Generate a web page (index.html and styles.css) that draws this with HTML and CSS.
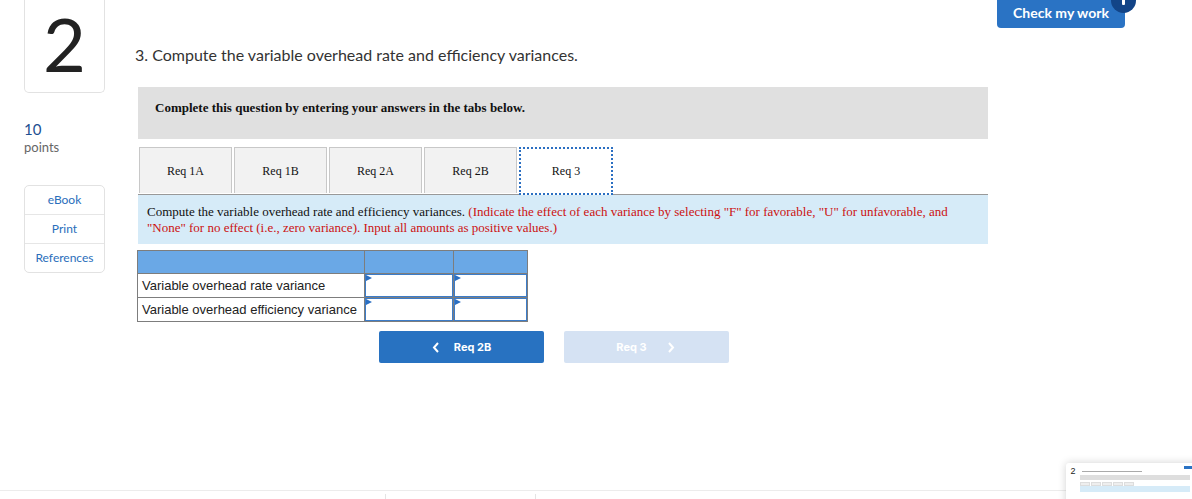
FILE: index.html
```html
<!DOCTYPE html>
<html>
<head>
<meta charset="utf-8">
<link rel="stylesheet" href="styles.css">
</head>
<body>
<div class="page">
  <aside class="side">
    <div class="qnum">2</div>
    <div class="pts"><div class="pts-val">10</div><div class="pts-lbl">points</div></div>
    <ul class="links">
      <li>eBook</li>
      <li>Print</li>
      <li>References</li>
    </ul>
  </aside>
  <main class="main">
    <h1 class="qtitle">3. Compute the variable overhead rate and efficiency variances.</h1>
    <div class="content">
      <div class="notice">Complete this question by entering your answers in the tabs below.</div>
      <div class="tabs">
        <div class="tab">Req 1A</div>
        <div class="tab">Req 1B</div>
        <div class="tab">Req 2A</div>
        <div class="tab">Req 2B</div>
        <div class="tab active">Req 3</div>
      </div>
      <div class="instr">Compute the variable overhead rate and efficiency variances. <span class="red">(Indicate the effect of each variance by selecting "F" for favorable, "U" for unfavorable, and "None" for no effect (i.e., zero variance). Input all amounts as positive values.)</span></div>
      <table class="grid">
        <tr class="head"><td class="c1"></td><td class="c2"></td><td class="c3"></td></tr>
        <tr><td class="c1">Variable overhead rate variance</td><td class="c2 inp"><span class="tri"></span></td><td class="c3 inp"><span class="tri"></span></td></tr>
        <tr><td class="c1">Variable overhead efficiency variance</td><td class="c2 inp"><span class="tri"></span></td><td class="c3 inp"><span class="tri"></span></td></tr>
      </table>
      <div class="nav">
        <button class="btn prev"><svg width="8" height="11" viewBox="0 0 8 11"><path d="M6 1 L2 5.5 L6 10" fill="none" stroke="#fff" stroke-width="2"/></svg><span>Req 2B</span></button>
        <button class="btn next"><span>Req 3</span><svg width="8" height="11" viewBox="0 0 8 11"><path d="M2 1 L6 5.5 L2 10" fill="none" stroke="#fff" stroke-width="2"/></svg></button>
      </div>
    </div>
  </main>
</div>
<button class="check">Check my work<span class="badge"></span></button>
<div class="footer-line"></div>
<div class="tick t1"></div>
<div class="tick t2"></div>
<div class="thumb">
  <div class="t-num">2</div>
  <div class="t-body">
    <div class="t-title"></div>
    <div class="t-gray"></div>
    <div class="t-tabs"><i></i><i></i><i></i><i></i><i></i></div>
    <div class="t-blue"></div>
  </div>
  <div class="t-btn"></div>
</div>
</body>
</html>
```
FILE: styles.css
```css
html, body { margin: 0; padding: 0; background: #fff; }
body { width: 1192px; height: 499px; overflow: hidden; position: relative; font-family: "Lato", "Liberation Sans", sans-serif; color: #333; }
.page { display: flex; align-items: flex-start; padding-left: 24px; }
.side { width: 81px; flex: none; }
.qnum { border: 1px solid #e2e2e2; border-top: none; border-radius: 0 0 5px 5px; text-align: center; font-size: 74px; color: #222; line-height: 88px; height: 93px; box-sizing: border-box; }
.pts { margin-top: 27px; }
.pts-val { font-size: 15px; color: #1d4f91; line-height: 18px; }
.pts-lbl { font-size: 13px; color: #666; line-height: 16px; margin-top: 1px; }
.links { list-style: none; margin: 30px 0 0; padding: 0; border: 1px solid #e2e2e2; border-radius: 5px; }
.links li { height: 28px; line-height: 28px; text-align: center; font-size: 12px; color: #2a6ebb; border-top: 1px solid #e6e6e6; }
.links li:first-child { border-top: none; }
.main { margin-left: 30px; width: 853px; }
.qtitle { margin: 45px 0 0; font-size: 16px; font-weight: 400; line-height: 20px; color: #333; }
.content { margin-left: 3px; font-family: "Liberation Serif", serif; }
.notice { margin-top: 22px; height: 52px; background: #e0e0e0; padding: 13px 0 0 17px; box-sizing: border-box; font-weight: 700; font-size: 13px; line-height: 16px; color: #111; }
.tabs { display: flex; gap: 2px; margin-top: 8px; padding-left: 1px; border-bottom: 1px solid #999; height: 47px; }
.tab { width: 91px; height: 45px; border: 1px solid #c8c8c8; border-bottom: none; background: #f2f2f2; text-align: center; line-height: 46px; font-size: 12px; color: #111; }
.tab.active { background: #fff; border: 2px dotted #2b6fc2; width: 90px; height: 44px; line-height: 44px; }
.instr { background: #d6ebf8; height: 49px; padding: 9px 9px 0; box-sizing: border-box; font-size: 13px; line-height: 16px; color: #111; }
.red { color: #cc1111; }
.grid { margin: 6px 0 0 -1px; border-collapse: collapse; font-family: "Liberation Sans", sans-serif; font-size: 13px; color: #222; }
.grid td { border: 1px solid #7d7d7d; height: 22px; padding: 0 4px; box-sizing: border-box; }
.grid .c1 { width: 227px; }
.grid .c2 { width: 89px; }
.grid .c3 { width: 74px; }
.grid tr.head td { background: #6aa8e6; height: 23px; }
.grid tr:not(.head) td { height: 24px; }
.grid td.inp { position: relative; border: 1px solid #7d7d7d; box-shadow: inset 0 0 0 1px #3c7cc8; }
.tri { position: absolute; left: 1px; top: 1px; width: 0; height: 0; border-top: 3px solid transparent; border-bottom: 3px solid transparent; border-left: 6px solid #2b6fc2; }
.nav { display: flex; gap: 20px; margin: 9px 0 0 241px; }
.btn { width: 165px; height: 32px; border: none; border-radius: 2px; display: flex; align-items: center; justify-content: center; gap: 14px; font-family: "Inter", "Liberation Sans", sans-serif; font-weight: 700; font-size: 11px; color: #fff; padding: 0; }
.prev { background: #2872c1; }
.next { background: #d5e2f3; gap: 20px; padding-right: 2px; }
.check { position: absolute; top: 0; left: 997px; width: 128px; height: 28px; border: none; border-radius: 0 0 4px 4px; background: #2a73c4; color: #fff; font-family: "Lato", "Liberation Sans", sans-serif; font-weight: 700; font-size: 14px; line-height: 24px; padding: 0 0 3px; }
.badge { position: absolute; left: 114px; top: -12px; width: 25px; height: 25px; border-radius: 50%; background: #124487; }
.badge::after { content: ""; position: absolute; left: 11px; top: 11px; width: 3px; height: 6px; background: #fff; border-radius: 1px; }
.footer-line { position: absolute; left: 0; right: 0; top: 490px; height: 1px; background: #ececec; }
.tick { position: absolute; top: 494px; width: 1px; height: 5px; background: #e4e4e4; }
.t1 { left: 385px; }
.t2 { left: 535px; }
.thumb { position: absolute; left: 1066px; top: 463px; width: 140px; height: 60px; background: #fff; border-radius: 3px; box-shadow: 0 0 8px rgba(0,0,0,0.18); display: flex; font-family: "Liberation Sans", sans-serif; }
.t-num { width: 14px; font-size: 9px; color: #222; text-align: center; padding-top: 3px; }
.t-body { margin-top: 8px; width: 110px; }
.t-title { height: 1px; width: 60px; background: #aaa; margin: 0 0 3px 2px; }
.t-gray { height: 5px; background: #dedede; }
.t-tabs { display: flex; gap: 1px; margin-top: 2px; height: 4px; }
.t-tabs i { width: 10px; height: 4px; background: #eee; border: 1px solid #ddd; box-sizing: border-box; }
.t-blue { height: 6px; background: #d6ebf8; }
.t-btn { position: absolute; right: 12px; top: 3px; width: 10px; height: 3px; background: #2a73c4; }
```
